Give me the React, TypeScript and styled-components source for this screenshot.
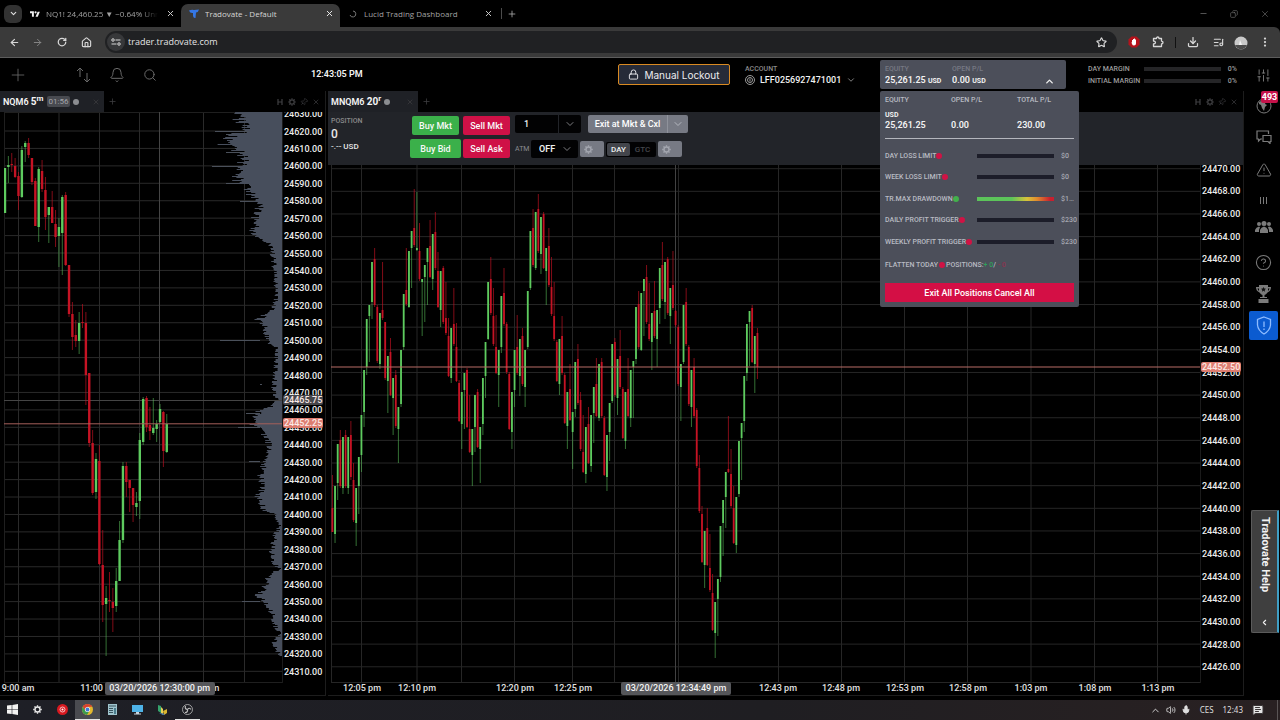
import React from 'react';
import styled, { createGlobalStyle } from 'styled-components';
import {
  ArrowLeft, ArrowRight, RotateCw, House, ChevronDown, ChevronUp, X, Plus, Star, Download,
  ListMusic, EllipsisVertical, Minus, Copy, Bell, Search, Lock, Settings, TriangleAlert,
  CircleHelp, Volume2, Mic, ChevronLeft, SlidersVertical, Pin, MessageSquareText,
} from 'lucide-react';

const Global = createGlobalStyle`
  *, *::before, *::after { box-sizing: border-box; }
  body { margin: 0; background: #000; color: #e8e8e8; font-family: Roboto, "Liberation Sans", sans-serif; font-size: 9px; }
  button, input, select { font: inherit; color: inherit; margin: 0; padding: 0; border: 0; background: none; outline: 0; }
  ul, ol, h2 { list-style: none; margin: 0; padding: 0; }
  svg { display: block; flex: none; }
`;

/* ---------- browser window ---------- */

const Page = styled.div`
  min-height: 100vh;
  display: flex;
  flex-direction: column;
`;

const TabStrip = styled.header`
  height: 27px;
  display: flex;
  align-items: center;
  font-family: "Open Sans", "Noto Sans", sans-serif;
  color: #a9a9a9;
`;

const TabSearch = styled.button`
  width: 18px;
  height: 18px;
  margin-left: 4px;
  border-radius: 6px;
  background: #323232;
  color: #e0e0e0;
  display: grid;
  place-items: center;
`;

const BrowserTab = styled.div<{ $active?: boolean; $width: number; $gap?: number }>`
  width: ${(p) => p.$width}px;
  height: 23px;
  margin-top: 4px;
  padding: 0 5px 4px 8px;
  border-radius: 7px 7px 0 0;
  background: ${(p) => (p.$active ? '#3a3a3a' : 'transparent')};
  color: ${(p) => (p.$active ? '#d6d6d6' : '#a2a2a2')};
  display: flex;
  align-items: center;
  gap: ${(p) => p.$gap ?? 5}px;
`;

const TabLabel = styled.span`
  flex: 1;
  font-size: 8px;
  line-height: 12px;
  white-space: nowrap;
  overflow: hidden;
`;

const FadedLabel = styled(TabLabel)`
  mask-image: linear-gradient(90deg, #000 85%, transparent);
`;

const IconButton = styled.button<{ $w?: number; $color?: string }>`
  width: ${(p) => p.$w ?? 12}px;
  height: 12px;
  color: ${(p) => p.$color ?? 'inherit'};
  display: grid;
  place-items: center;
`;

const Separator = styled.span<{ $color: string; $gap: number }>`
  width: 1px;
  height: 11px;
  margin: 0 ${(p) => p.$gap}px;
  background: ${(p) => p.$color};
`;

const WindowControls = styled.div`
  margin-left: auto;
  display: flex;
  color: #6e6e6e;
`;

const AddressRow = styled.div`
  height: 31px;
  padding: 0 6px 0 3px;
  background: #3a3a3a;
  border-bottom: 1px solid #5d5d5d;
  border-radius: 0 6px 0 0;
  display: flex;
  align-items: center;
  color: #d8d8d8;
`;

const Omnibox = styled.label`
  flex: 1;
  height: 22px;
  margin-left: 7px;
  padding: 0 10px 0 2px;
  border-radius: 11px;
  background: #202123;
  display: flex;
  align-items: center;
  gap: 3px;
`;

const SiteBadge = styled.span`
  width: 18px;
  height: 18px;
  border-radius: 9px;
  background: #37383a;
  display: grid;
  place-items: center;
`;

const UrlInput = styled.input`
  flex: 1;
  min-width: 0;
  font: 9px/14px "Open Sans", "Noto Sans", sans-serif;
  color: #e4e4e4;
`;

const Extensions = styled.div`
  margin-left: 10px;
  display: flex;
  align-items: center;
`;

/* ---------- trading application ---------- */

const Workspace = styled.div`
  flex: 1;
  display: grid;
  grid-template-columns: minmax(0, 1fr) 36px;
`;

const Main = styled.main`
  display: flex;
  flex-direction: column;
`;

const AppBar = styled.div`
  height: 33px;
  padding: 2px 7px 0 0;
  display: flex;
  align-items: flex-start;
  color: #6a6a6a;
`;

const ToolButtons = styled.div`
  height: 29px;
  padding-left: 8px;
  display: flex;
  align-items: center;
`;

const ToolButton = styled.button<{ $w: number }>`
  width: ${(p) => p.$w}px;
  height: 22px;
  display: flex;
  align-items: center;
`;

const Clock = styled.time`
  margin-left: 147px;
  font-size: 9px;
  font-weight: 600;
  line-height: 29px;
  color: #f4f4f4;
`;

const LockoutButton = styled.button`
  width: 112px;
  height: 21px;
  margin: 4px 15px 0 auto;
  border: 1px solid #d98a22;
  border-radius: 2px;
  background: #262b38;
  color: #ececf0;
  font-family: Inter, sans-serif;
  font-size: 10px;
  font-weight: 400;
  display: flex;
  align-items: center;
  justify-content: center;
  gap: 5px;
  white-space: nowrap;
`;

const Account = styled.div`
  width: 135px;
  padding-top: 4px;
`;

const Caption = styled.div<{ $color?: string }>`
  font-size: 7px;
  line-height: 10px;
  font-weight: 500;
  color: ${(p) => p.$color ?? '#8a8a8a'};
  white-space: nowrap;
`;

const AccountButton = styled.button`
  height: 12px;
  display: flex;
  align-items: center;
  gap: 5px;
  font-size: 9px;
  font-weight: 500;
  color: #f2f2f2;

  & > svg { color: #9a9a9a; }
`;

const EquityAnchor = styled.div`
  position: relative;
  width: 186px;
`;

const EquityBox = styled.button`
  width: 100%;
  height: 29px;
  padding: 4px 11px 0 5px;
  border-radius: 2px;
  background: #4c4f5a;
  display: grid;
  grid-template-columns: 67px 1fr auto;
  text-align: left;
`;

const Figure = styled.div`
  font-size: 9px;
  line-height: 13px;
  font-weight: 600;
  color: #f2f2f2;
  white-space: nowrap;

  & small { font-size: 7px; font-weight: 700; }
`;

const ChevronSlot = styled.span`
  padding-top: 12px;
  color: #f0f0f0;
`;

const EquityPopup = styled.section`
  position: absolute;
  z-index: 2;
  top: 31px;
  left: 0;
  width: 199px;
  height: 216px;
  padding: 3px 5px 4px;
  border-radius: 2px;
  background: #4c4f5a;
  color: #b9bbc3;
  display: flex;
  flex-direction: column;
`;

const EquityTable = styled.table`
  width: 100%;
  border-collapse: collapse;
  border-bottom: 1px solid #b4b6bd;
  table-layout: fixed;
  text-align: left;

  & th { width: 66px; padding: 0; font-size: 7px; font-weight: 500; line-height: 12px; }
  & th:last-child { width: auto; }
  & td { padding: 4px 0 7px; font-size: 9px; font-weight: 600; line-height: 11px; color: #f2f2f2; vertical-align: bottom; }
  & small { display: block; font-size: 7px; font-weight: 700; line-height: 10px; }
`;

const Limits = styled.ul`
  padding-top: 6px;
`;

const LimitRow = styled.li`
  height: 21px;
  display: grid;
  grid-template-columns: 92px 77px 1fr;
  align-items: center;
  font-size: 7px;
  font-weight: 500;
  white-space: nowrap;

  &:nth-child(even) { height: 22px; }
`;

const LimitName = styled.span`
  display: flex;
  align-items: center;
`;

const Dot = styled.i<{ $color: string; $size?: number }>`
  width: ${(p) => p.$size ?? 6}px;
  height: ${(p) => p.$size ?? 6}px;
  border-radius: 50%;
  background: ${(p) => p.$color};
`;

const LimitBar = styled.span<{ $fill?: string }>`
  height: 4px;
  background: ${(p) => p.$fill ?? '#1c1d29'};
`;

const LimitValue = styled.span`
  padding-left: 7px;
  color: #a6a8b1;
`;

const FlattenRow = styled.p`
  margin: 7px 0 12px;
  font-size: 7px;
  line-height: 12px;
  font-weight: 500;
  display: flex;
  align-items: center;
  gap: 1px;
`;

const Tint = styled.span<{ $color: string }>`
  color: ${(p) => p.$color};
`;

const ExitAll = styled.button`
  height: 19px;
  background: #d40f45;
  color: #fff;
  font-size: 9px;
  font-weight: 500;
`;

const Margins = styled.div`
  width: 149px;
  margin-left: 22px;
  padding-top: 3px;
`;

const MarginRow = styled.div`
  height: 12px;
  display: grid;
  grid-template-columns: 56px 77px 1fr;
  align-items: center;
  font-size: 7px;
  font-weight: 500;
  color: #9b9b9b;
  white-space: nowrap;
  text-align: right;

  & > :first-child { text-align: left; }
`;

const MarginBar = styled.span`
  height: 4px;
  background: #252527;
`;

const Panels = styled.div`
  flex: 1;
  margin-bottom: 4px;
  display: grid;
  grid-template-columns: 326fr 918fr;
`;

const Panel = styled.section<{ $gap?: number }>`
  min-width: 0;
  margin-left: ${(p) => p.$gap ?? 0}px;
  border: solid #1d1d1d;
  border-width: 0 1px 1px 0;
  display: flex;
  flex-direction: column;
`;

const PanelTabs = styled.div`
  height: 21px;
  padding-right: 3px;
  display: flex;
  align-items: center;
  color: #3f3f42;
`;

const PanelTab = styled.div<{ $w: number }>`
  width: ${(p) => p.$w}px;
  height: 21px;
  padding: 0 4px 0 3px;
  background: #1f2126;
  display: flex;
  align-items: center;
  gap: 3px;
`;

const Symbol = styled.h2`
  font-size: 9px;
  line-height: 14px;
  font-weight: 600;
  color: #f4f4f4;
  white-space: nowrap;

  & b { font-size: 10px; font-weight: 700; }
  & sup { font-size: 8px; line-height: 0; }
`;

const Countdown = styled.span`
  padding: 0 2px;
  border-radius: 2px;
  background: #484a50;
  color: #a5a7ac;
  font-size: 8px;
  line-height: 11px;
`;

const Push = styled.span`
  margin-left: auto;
  display: flex;
`;

const OrderBar = styled.div`
  height: 53px;
  padding: 3px 0 0 3px;
  background: #222429;
  display: flex;
`;

const Position = styled.div`
  width: 79px;
  padding-top: 1px;
  font-weight: 500;
`;

const PositionQty = styled.div`
  font-size: 12px;
  line-height: 16px;
`;

const PositionPl = styled.div`
  font-size: 8px;
  line-height: 10px;
`;

const OrderButtons = styled.div`
  padding-top: 1px;
  display: grid;
  grid-template: 19px 19px / 51px 47px;
  gap: 4px 2px;
  justify-items: center;
`;

const OrderButton = styled.button<{ $side: 'buy' | 'sell'; $w: number }>`
  width: ${(p) => p.$w}px;
  height: 19px;
  border-radius: 2px;
  background: ${(p) => (p.$side === 'buy' ? '#3bb04a' : '#cf1147')};
  color: #f8f8f8;
  font-size: 9px;
  font-weight: 500;
  white-space: nowrap;
`;

const OrderOptions = styled.div`
  margin-left: 5px;
`;

const OptionRow = styled.div<{ $top?: number }>`
  height: 18px;
  margin-top: ${(p) => p.$top ?? 0}px;
  display: flex;
  align-items: center;
`;

const Quantity = styled.div`
  width: 66px;
  height: 18px;
  margin-right: 7px;
  border-radius: 2px;
  background: #020203;
  display: flex;
  color: #7c7c80;

  & input { width: 44px; padding-left: 9px; border-right: 1px solid #222429; color: #f0f0f0; font-size: 9px; font-weight: 500; }
  & button { flex: 1; display: grid; place-items: center; }
`;

const ExitGroup = styled.div`
  width: 100px;
  height: 18px;
  border-radius: 2px;
  background: #777a84;
  display: flex;
  overflow: hidden;
  color: #fff;

  & button:first-child { width: 80px; border-right: 1px solid #8f929b; font-size: 9px; font-weight: 500; white-space: nowrap; }
  & button:last-child { flex: 1; display: grid; place-items: center; color: #b4b7bf; }
`;

const AtmLabel = styled.label`
  width: 16px;
  font-size: 7px;
  color: #8a8c91;
`;

const AtmSelect = styled.span`
  width: 47px;
  height: 18px;
  padding: 0 5px 0 8px;
  margin-right: 2px;
  border-radius: 2px;
  background: #020203;
  display: flex;
  align-items: center;
  color: #7c7c80;

  & select { flex: 1; min-width: 0; appearance: none; color: #f0f0f0; font-size: 9px; font-weight: 600; }
`;

const GearButton = styled.button`
  width: 24px;
  height: 16px;
  padding-left: 4px;
  border-radius: 2px;
  background: #777a84;
  color: #a3a6af;
`;

const Toggle = styled.div`
  width: 50px;
  height: 15px;
  margin: 0 2px;
  padding: 1px;
  border-radius: 2px;
  background: #020203;
  display: flex;
`;

const ToggleButton = styled.button<{ $on?: boolean; $w: number }>`
  width: ${(p) => p.$w}px;
  border-radius: 2px;
  background: ${(p) => (p.$on ? '#43454b' : 'transparent')};
  color: ${(p) => (p.$on ? '#f0f0f0' : '#45474c')};
  font-size: 8px;
  font-weight: 500;
`;

const ChartBody = styled.div<{ $left: number }>`
  flex: 1;
  min-height: 0;
  padding-left: ${(p) => p.$left}px;
  display: grid;
  grid-template: minmax(0, 1fr) 12px / minmax(0, 1fr) 43px;
`;

const ChartCell = styled.div`
  min-width: 0;
  min-height: 0;

  & svg { width: 100%; height: 100%; }
`;

const PriceAxis = styled.div`
  position: relative;
  min-height: 0;
  display: flex;
  flex-direction: column;
  overflow: hidden;
  border-left: 1px solid #1b1b1b;
`;

const PriceList = styled.ol<{ $top: number; $bottom: number }>`
  flex: 1;
  margin: ${(p) => p.$top}px 0 ${(p) => p.$bottom}px;
  display: flex;
  flex-direction: column;
`;

const Price = styled.li`
  flex: 1 1 0;
  min-height: 0;
  padding-left: 1px;
  display: flex;
  align-items: center;
  font-size: 9px;
  line-height: 9px;
  font-weight: 500;
  color: #ececec;
`;

const PriceTag = styled.span<{ $at: number; $bg: string }>`
  position: absolute;
  top: ${(p) => p.$at}%;
  left: 0;
  width: 40px;
  height: 10px;
  padding-left: 1px;
  transform: translateY(-50%);
  border-radius: 2px;
  background: ${(p) => p.$bg};
  color: #fbe9e6;
  font-size: 9px;
  line-height: 10px;
  font-weight: 500;
`;

const TimeAxis = styled.div`
  position: relative;
  display: flex;
`;

const Tick = styled.div<{ $span: number }>`
  flex: ${(p) => p.$span} 0 0;
  display: flex;
  justify-content: flex-end;

  & span {
    width: 0;
    display: flex;
    justify-content: center;
    white-space: nowrap;
    font-size: 9px;
    line-height: 10px;
    font-weight: 500;
    color: #e0e0e0;
  }
`;

const TimeTag = styled.span<{ $at: number }>`
  position: absolute;
  top: -1px;
  left: ${(p) => p.$at}%;
  width: 110px;
  height: 13px;
  transform: translateX(-50%);
  border-radius: 2px;
  background: #55565a;
  color: #f2f2f2;
  font-size: 9px;
  line-height: 13px;
  font-weight: 500;
  text-align: center;
`;

const Sidebar = styled.nav`
  padding: 0 2px 0 5px;
  display: flex;
  flex-direction: column;
  color: #7b7b7b;
`;

const SideButton = styled.button<{ $h: number }>`
  position: relative;
  height: ${(p) => p.$h}px;
  display: grid;
  place-items: center;
`;

const Badge = styled.span`
  position: absolute;
  top: -1px;
  right: 0;
  width: 17px;
  height: 12px;
  border-radius: 2px;
  background: #c5124a;
  color: #fff;
  font-size: 9px;
  line-height: 12px;
  font-weight: 700;
  text-align: center;
`;

const ShieldButton = styled.button`
  height: 29px;
  margin-top: 7px;
  border-radius: 2px;
  background: #0b5bd0;
  color: #8fbcff;
  display: grid;
  place-items: center;
`;

const HelpTab = styled.button`
  width: 28px;
  height: 123px;
  margin: auto 0 67px 2px;
  padding: 6px 0 5px;
  border: 1px solid #5b5b5b;
  border-right: 2px solid #3f9fc6;
  border-radius: 2px 0 0 2px;
  background: #3f3f3f;
  color: #f2f2f2;
  display: flex;
  flex-direction: column;
  align-items: center;
  justify-content: space-between;

  & span { writing-mode: vertical-rl; font-size: 11px; line-height: 14px; font-weight: 700; }
`;

/* ---------- taskbar ---------- */

const Taskbar = styled.footer`
  height: 20px;
  padding-right: 2px;
  background: linear-gradient(90deg, #1e1f26, #1f1e22 60%, #292122);
  display: flex;
`;

const TaskButton = styled.button<{ $active?: boolean; $open?: boolean }>`
  width: 25px;
  background: ${(p) => (p.$active ? '#4a4b50' : 'transparent')};
  border-bottom: 1px solid ${(p) => (p.$active || p.$open ? '#e4e4e4' : 'transparent')};
  display: grid;
  place-items: center;
`;

const Tray = styled.div`
  margin-left: auto;
  display: flex;
  align-items: center;
  gap: 5px;
  font-size: 8px;
  line-height: 12px;
  font-family: "Noto Sans", "Open Sans", sans-serif;
  color: #dedede;
`;

const TrayText = styled.span`
  margin-left: 4px;
`;

const TrayEnd = styled.span`
  width: 9px;
  height: 20px;
  border-right: 1px solid #5a5555;
`;

/* ---------- chart data ---------- */

/* One candle: direction, high, body top, body bottom, low (vertical chart units). */
type Candle = [1 | 0, number, number, number, number];

const parse = (rows: string): Candle[] =>
  rows.trim().split(/\s+/).map((row) => {
    const n = row.slice(1).split(',').map(Number);
    return [row[0] === 'g' ? 1 : 0, n[0], n[1], n[2], n[3]] as Candle;
  });

const NQ_CANDLES = parse(`
  g168,168,213,213 g156,165,167,183 r153,164,165,172 r158,166,177,178 r172,176,196,210 g146,150,197,198
  g141,143,147,162 r138,143,155,158 r158,158,182,185 r178,181,226,226 g167,169,227,242 r160,171,189,192
  r177,190,217,230 g207,207,215,243 r191,207,223,223 r210,224,237,247 g218,227,236,267 g195,197,233,275
  r192,195,265,266 r265,265,314,317 r302,314,337,350 r320,335,341,347 g312,323,341,354 r304,322,323,328
  r312,323,375,405 r373,373,443,447 r430,443,493,495 g453,459,492,499 r445,461,564,565 r530,565,605,622
  g586,598,604,656 r572,600,601,612 r588,602,608,632 g568,581,606,612 g521,540,581,581 g462,466,540,543
  r462,466,482,497 r480,480,488,512 r488,488,505,522 g492,503,507,516 g433,440,501,519 g397,399,442,445
  r396,398,427,432 r407,425,431,440 g398,428,433,435 g420,424,429,442 g404,409,422,424 r411,412,451,467
  g414,424,452,453
`);

const MNQ_CANDLES = parse(`
  r475,508,532,532 g486,486,534,543 g444,444,483,500 r430,440,486,488 g437,437,488,494 r430,435,486,488
  g437,437,488,494 r421,435,477,480 r463,480,520,522 g488,488,523,546 g457,457,486,514 g415,415,455,472
  g370,370,412,427 g319,319,367,375 g305,305,316,362 g262,262,302,319 r248,259,305,307 r305,307,361,363
  g313,313,364,369 r262,310,318,320 r322,322,378,380 g356,356,381,413 r338,352,395,396 g378,378,398,435
  r370,375,426,428 g407,407,429,463 g350,350,404,407 g294,294,347,350 r248,290,304,306 g251,251,307,308
  g231,231,248,288 r189,228,245,247 g192,248,250,251 r223,251,279,281 g279,279,282,336 g265,265,277,322
  g248,248,262,305 r220,246,277,278 g234,234,279,290 r212,232,268,270 r252,271,307,308 g271,271,310,327
  r266,268,322,324 r282,318,333,335 r318,336,376,377 g328,328,378,383 r288,324,344,346 r323,347,381,382
  r380,383,421,422 g392,392,424,449 g373,373,390,429 r368,370,427,428 r395,429,452,453 g429,429,455,486
  g395,395,427,452 r389,392,447,448 g427,427,449,483 g378,378,424,435 g342,342,376,398 g282,282,339,340
  r257,279,313,315 r288,316,344,346 r315,347,373,374 g350,350,375,407 g296,296,347,353 r268,293,324,326
  r322,324,372,374 r372,374,429,430 g392,392,432,449 g350,350,390,407 r315,347,373,375 g339,339,376,396
  r328,336,384,386 g350,350,387,407 g291,291,347,349 g231,231,288,290 r209,228,265,267 g212,212,268,270
  r194,209,251,253 g217,217,254,274 r212,214,268,269 g248,248,271,305 r228,246,285,287 r257,287,314,316
  r282,316,339,341 r340,342,381,382 g339,339,384,395 r316,336,373,375 r373,375,423,424 g392,392,426,449
  r364,389,420,421 g412,412,432,469 g362,362,409,417 r344,359,403,405 r392,400,449,451 r415,452,472,473
  g427,427,474,483 r407,424,463,464 g415,415,466,472 g387,387,413,443 r358,384,416,417 g364,364,418,421
  r358,362,416,418 r416,418,475,476 g435,435,477,491 g403,403,432,461 g344,344,401,403 r338,342,395,397
  g359,359,398,415 r330,356,387,389 r387,389,438,439 g392,392,441,449 r358,389,416,417 g370,370,418,427
  g361,361,367,418 g307,307,359,364 r291,304,347,349 g293,293,350,351 g279,279,291,336 r265,277,322,324
  r283,324,339,341 g313,313,342,370 r281,311,336,338 g310,310,339,367 g268,268,308,324 r242,265,299,301
  g262,262,302,319 r257,259,313,315 g288,288,316,344 r251,285,308,310 r310,311,325,327 r325,327,384,386
  g364,364,387,421 g305,305,362,364 r288,302,344,346 r345,347,404,406 g370,370,407,427 r358,367,416,418
  r408,410,466,468 r455,468,511,513 r506,514,562,563 g531,531,565,588 r508,528,565,566 r534,568,590,592
  r574,593,630,631 g602,602,633,658 g579,579,599,636 g526,526,577,582 g500,500,523,556 g472,472,497,528
  r416,469,472,473 r449,474,506,508 r486,508,543,544 g497,497,545,553 g441,441,494,497 g423,423,438,480
  g376,376,421,432 g324,324,373,381 g311,311,322,366 r305,308,362,363 g336,336,364,393 r328,333,367,379
`);

/* Volume-at-price outline: [y, left edge]. */
const PROFILE: [number, number][] = [
  [112, 244], [118, 242], [125, 247], [131, 247], [135, 236], [142, 226], [146, 232], [152, 244], [160, 246],
  [167, 243], [173, 237], [180, 242], [186, 248], [194, 253], [206, 261], [216, 256], [224, 257], [233, 253],
  [237, 260], [244, 269], [256, 273], [272, 274], [284, 275], [300, 275], [308, 272], [314, 266], [320, 258],
  [327, 266], [340, 266], [347, 275], [364, 275], [380, 274], [392, 273], [400, 276], [407, 269], [411, 259],
  [423, 255], [432, 262], [443, 269], [460, 267], [471, 261], [488, 262], [500, 259], [510, 266], [515, 275],
  [525, 279], [533, 275], [547, 272], [560, 271], [568, 278], [577, 268], [587, 265], [594, 259], [603, 265],
  [613, 272], [627, 275], [634, 279], [643, 272], [650, 276], [656, 280],
];

const profilePath = () => {
  let d = 'M282 112';
  for (let y = 112; y < 656; y += 1) {
    const k = PROFILE.findIndex((p) => p[0] > y);
    const [y0, x0] = PROFILE[k - 1];
    const [y1, x1] = PROFILE[k];
    const base = x0 + ((x1 - x0) * (y - y0)) / (y1 - y0);
    const noise = Math.abs(Math.sin(y * 12.9898) * 43758.5453) % 1;
    const reach = (282 - base) * 0.26 + 1;
    const x = Math.min(281, base + 1 - (noise ** 2) * reach + (noise < 0.3 ? 2 : 0));
    d += `L${x.toFixed(1)} ${y}V${y + 1}`;
  }
  return `${d}H282Z`;
};

const PROFILE_PATH = profilePath();
const PROFILE_SPIKES: [number, number][] = [[131, 215], [134, 226], [152, 226], [166, 212], [183, 226], [201, 240], [340, 220], [384, 262], [413, 246], [427, 238], [461, 249], [601, 242]];

const Candles = ({ data, x0, step, body }: { data: Candle[]; x0: number; step: number; body: number }) => (
  <g>
    {data.map(([up, high, top, bottom, low], i) => {
      const x = x0 + i * step;
      return (
        <g key={i} fill={up ? '#5ecb5f' : '#c51324'}>
          <rect x={x - 0.5} y={high} width={1} height={low - high} opacity={up ? 0.55 : 0.65} />
          <rect x={x - body / 2} y={top} width={body} height={Math.max(1, bottom - top)} />
        </g>
      );
    })}
  </g>
);

const range = (n: number) => Array.from({ length: n }, (_, i) => i);

const NqChart = () => (
  <svg viewBox="4 112 278 571" preserveAspectRatio="none" role="img" aria-label="NQM6 five minute candles">
    <g stroke="#2a2a2a">
      {range(32).map((i) => <path key={i} d={`M4 ${131 + i * 17.43}H282`} />)}
      {[18.5, 59, 99.5, 139.5, 203.5, 244.5].map((x) => <path key={x} d={`M${x} 112V683`} />)}
      <path d="M4.5 112V683M4 682.5H282M4 112.5H282" stroke="#1f1f1f" />
    </g>
    <g stroke="#4a505a">
      {PROFILE_SPIKES.map(([y, x]) => <path key={y} d={`M${x} ${y + 0.5}H260`} />)}
    </g>
    <path d={PROFILE_PATH} fill="#474e5c" />
    <path d="M159.5 112V683M4 400.5H282" stroke="#454545" />
    <Candles data={NQ_CANDLES} x0={5} step={3.37} body={2.4} />
    <path d="M4 423.8H282" stroke="#a6605b" />
  </svg>
);

const MnqChart = () => (
  <svg viewBox="331 165 869 518" preserveAspectRatio="none" role="img" aria-label="MNQM6 twenty range candles">
    <g stroke="#262626">
      {range(23).map((i) => <path key={i} d={`M331 ${168.7 + i * 22.64}H1200`} />)}
      {[361.5, 417, 461.5, 514.5, 572.5, 614.5, 678.5, 778.5, 841.5, 904.5, 967.5, 1031, 1094.5, 1157.5].map((x) => (
        <path key={x} d={`M${x} 165V683`} />
      ))}
      <path d="M331.5 165V683M331 682.5H1200" />
    </g>
    <path d="M675.5 165V683" stroke="#424242" />
    <Candles data={MNQ_CANDLES} x0={332.4} step={2.64} body={1.8} />
    <path d="M331 367H1200" stroke="#b86c66" />
  </svg>
);

const NQ_PRICES = range(33).map((i) => `${24630 - i * 10}.00`);
const MNQ_PRICES = range(23).map((i) => `${24470 - i * 2}.00`);

/* Time ticks: [label, distance from the previous tick]. */
const NQ_TICKS: [string, number][] = [['9:00 am', 14], ['11:00 am', 81], ['1:00 pm', 104], ['', 79]];
const MNQ_TICKS: [string, number][] = [
  ['12:05 pm', 31], ['12:10 pm', 55], ['12:20 pm', 98], ['12:25 pm', 58], ['12:43 pm', 205], ['12:48 pm', 63],
  ['12:53 pm', 64], ['12:58 pm', 63], ['1:03 pm', 63], ['1:08 pm', 64], ['1:13 pm', 63], ['', 42],
];

const LIMITS = [
  { name: 'DAY LOSS LIMIT', value: '$0', ok: false },
  { name: 'WEEK LOSS LIMIT', value: '$0', ok: false },
  { name: 'TR.MAX DRAWDOWN', value: '$1…', ok: true },
  { name: 'DAILY PROFIT TRIGGER', value: '$230', ok: false },
  { name: 'WEEKLY PROFIT TRIGGER', value: '$230', ok: false },
];

const DRAWDOWN_FILL = 'linear-gradient(90deg, #5cc45a 45%, #d8c23a 65%, #e08a2e 78%, #c8202f 95%)';

const Ticks = ({ items }: { items: [string, number][] }) => (
  <>
    {items.map(([label, span]) => (
      <Tick key={label} $span={span}><span>{label}</span></Tick>
    ))}
  </>
);

const PanelActions = () => (
  <Push>
    <IconButton aria-label="History"><svg width="6" height="6" viewBox="0 0 6 6" stroke="currentColor" strokeWidth="1.2"><path d="M1 0V6M5 0V6M1 3H5" /></svg></IconButton>
    <IconButton aria-label="Settings"><GearIcon size={8} /></IconButton>
    <IconButton aria-label="Pin"><Pin size={8} transform="rotate(45)" /></IconButton>
    <IconButton aria-label="Close panel"><X size={8} /></IconButton>
  </Push>
);

/* ---------- custom icons ---------- */

/* Ring with eight short teeth. */
const GearIcon = ({ size }: { size: number }) => (
  <svg width={size} height={size} viewBox="0 0 20 20" fill="none" stroke="currentColor" strokeWidth="3">
    <circle cx="10" cy="10" r="5.500" />
    {range(8).map((i) => <path key={i} d="M10 0.500V4" transform={`rotate(${i * 45} 10 10)`} />)}
  </svg>
);
const TradingViewLogo = () => (
  <svg width="10" height="8" viewBox="0 0 36 28" fill="#f0f0f0"><path d="M14 24H7V11H0V4h14v20zM28 24h-8l7.500-18h8L28 24z" /><circle cx="20" cy="8" r="4" /></svg>
);
const TradovateLogo = () => (
  <svg width="10" height="10" viewBox="0 0 20 20" fill="#3577e5"><path d="M0 3Q5 1 10 2L20 1Q19 6 14 7L13 18Q9 19 8 14V8Q2 9 0 3z" /></svg>
);
const SiteIcon = () => (
  <svg width="10" height="8" viewBox="0 0 20 16" fill="none" stroke="#d8d8d8" strokeWidth="2"><circle cx="4" cy="4" r="2.500" /><path d="M9 4H19M1 12H11" /><circle cx="16" cy="12" r="2.500" /></svg>
);
const BlockerIcon = () => (
  <svg width="12" height="12" viewBox="0 0 24 24"><path d="M7 1H17L23 7V17L17 23H7L1 17V7Z" fill="#b5121b" /><path d="M8 12V8h2V6h2V5h2v2h2v8q0 4-4 4-3 0-4-3l-1-3z" fill="#fff" /></svg>
);
const PuzzleIcon = () => (
  <svg width="12" height="12" viewBox="0 0 24 24" fill="none" stroke="currentColor" strokeWidth="2.600" strokeLinejoin="round"><path d="M3 5H9Q9 2 11.500 2T14 5H19V10Q22 10.500 22 13T19 16V21H3V16Q7 15.500 7 13T3 10Z" /></svg>
);
const AvatarIcon = () => (
  <svg width="14" height="14" viewBox="0 0 14 14"><circle cx="7" cy="7" r="6.500" fill="#c9c9c9" /><path d="M1 9H13Q11 13 7 13.500 3 13 1 9z" fill="#4b4b4b" /><path d="M6 4l2 5H5z" fill="#f4f4f4" /></svg>
);
const SwapIcon = () => (
  <svg width="15" height="18" viewBox="0 0 15 18" fill="none" stroke="currentColor"><path d="M4 11V2M1 5l3-3 3 3M11 7V16M8 13l3 3 3-3" /></svg>
);
const CoinIcon = () => (
  <svg width="10" height="10" viewBox="0 0 20 20" fill="none" stroke="currentColor" strokeWidth="2"><circle cx="10" cy="10" r="9" /><circle cx="10" cy="10" r="5" /><path d="M10 7v6" /></svg>
);
const GlobeIcon = () => (
  <svg width="16" height="16" viewBox="0 0 16 16"><circle cx="8" cy="8" r="7" fill="none" stroke="currentColor" /><path d="M3 4l4-2 3 1-1 3 2 1-2 2-1 4-2-3-1-3-2-1z" fill="currentColor" /></svg>
);
const ChatIcon = () => (
  <svg width="16" height="14" viewBox="0 0 16 14" fill="none" stroke="currentColor" strokeWidth="1.200"><path d="M6 9H4.500L2.500 11V9H1V1H12.500V4" /><path d="M7 5.500H15V11.500H14V13.500L12 11.500H7Z" /></svg>
);
const BarsIcon = () => (
  <svg width="7" height="7" viewBox="0 0 7 7" stroke="currentColor"><path d="M.5 0V7M3.500 0V7M6.500 0V7" /></svg>
);
const PeopleIcon = () => (
  <svg width="18" height="12" viewBox="0 0 18 12" fill="currentColor"><circle cx="9" cy="2.500" r="2.500" /><circle cx="4" cy="3" r="2" /><circle cx="14" cy="3" r="2" /><path d="M5 12V9q1-3 4-3.500Q12 6 13 9v3zM0 11V9q1-3 4-3.500l1 .8L4 9v2zM18 11V9q-1-3-4-3.500l-1 .8L14 9v2z" /></svg>
);
const TrophyIcon = () => (
  <svg width="15" height="18" viewBox="0 0 15 18"><path d="M3 0H12V2H15Q15 6 11.500 7.500 10 9.500 8.500 10V12H11V13H4V12H6.500V10Q5 9.500 3.500 7.500 0 6 0 2H3zM1.500 3.500Q2 5 3 6V3.500zM13.500 3.500H12V6Q13 5 13.500 3.500z" fill="currentColor" fillRule="evenodd" /><path d="M7.500 2l.8 1.600 1.700.2-1.300 1.200.4 1.700-1.600-.9-1.600.9.4-1.700L5 3.800l1.700-.2z" fill="#111" /><path d="M2.500 14H12.500V18H2.500z" fill="currentColor" /></svg>
);
const ShieldIcon = () => (
  <svg width="16" height="19" viewBox="0 0 16 19" fill="none" stroke="currentColor" strokeWidth="1.300"><path d="M8 1l6.500 2.500V9Q14 14.500 8 18 2 14.500 1.500 9V3.500z" /><path d="M8 5.500V11M8 12.500V14" /></svg>
);
const WindowsIcon = () => (
  <svg width="11" height="11" viewBox="0 0 11 11" fill="#f4f4f4"><path d="M0 1.600L4.700 1V5.200H0zM5.300.9L11 0V5.200H5.300zM0 5.800H4.700V10L0 9.400zM5.300 5.800H11V11L5.300 10.100z" /></svg>
);
const RecordIcon = () => (
  <svg width="11" height="11" viewBox="0 0 11 11"><circle cx="5.500" cy="5.500" r="5.500" fill="#d81920" /><circle cx="5.500" cy="5.500" r="2.500" fill="none" stroke="#fff" strokeWidth=".7" /><circle cx="5.500" cy="5.500" r="1" fill="#fff" /></svg>
);
const ChromeIcon = () => (
  <svg width="11" height="11" viewBox="0 0 22 22"><circle cx="11" cy="11" r="11" fill="#e3b92f" /><path d="M1.500 5.500A11 11 0 0 1 20.500 5.500H11L7 13.500z" fill="#d8402f" /><path d="M1.500 5.500A11 11 0 0 0 10 22L15 13.500 7 14z" fill="#3b9b4e" /><circle cx="11" cy="11" r="5" fill="#fff" /><circle cx="11" cy="11" r="3.800" fill="#4079d8" /></svg>
);
const NotesIcon = () => (
  <svg width="9" height="11" viewBox="0 0 9 11"><path d="M0 0H9V11H0z" fill="#9fc3cd" /><path d="M1 2H8M1 4.500H5M1 6.500H5M1 8.500H5" stroke="#38545e" /><path d="M6 4H8V10H6z" fill="#4a7c8c" /></svg>
);
const MonitorIcon = () => (
  <svg width="11" height="11" viewBox="0 0 11 11"><path d="M0 1H11V8H0z" fill="#4eb3e8" /><path d="M4 8H7V9.500H9V10.500H2V9.500H4z" fill="#c8d4dc" /></svg>
);
const ChartAppIcon = () => (
  <svg width="9" height="10" viewBox="0 0 9 10"><path d="M0 0L3 1V8L0 6z" fill="#35a36c" /><path d="M3 2L5 4V9L3 8z" fill="#e8d15a" /><path d="M5 6L9 4V8L6 10z" fill="#d9b52e" /><path d="M1 8L7 9 5 10z" fill="#4b87c9" /></svg>
);
const ObsIcon = () => (
  <svg width="11" height="11" viewBox="0 0 22 22" fill="none" stroke="#bcbcbc" strokeWidth="1.600"><circle cx="11" cy="11" r="10" /><path d="M11 11Q5 10 7 4M11 11Q15 6 18 11M11 11Q12 17 6 17" strokeWidth="2.400" /></svg>
);

/* ---------- sections ---------- */

const BrowserChrome = () => (
  <>
    <TabStrip>
      <TabSearch aria-label="Search tabs"><ChevronDown size={9} strokeWidth={3} /></TabSearch>
      <BrowserTab $width={159} $gap={6}>
        <TradingViewLogo />
        <FadedLabel>NQ1! 24,460.25 ▼ −0.64% Unn</FadedLabel>
        <IconButton aria-label="Close tab" $color="#d0d0d0"><X size={9} strokeWidth={2.500} /></IconButton>
      </BrowserTab>
      <BrowserTab $active $width={159} $gap={6}>
        <TradovateLogo />
        <TabLabel>Tradovate - Default</TabLabel>
        <IconButton aria-label="Close tab" $color="#f0f0f0"><X size={9} strokeWidth={2.500} /></IconButton>
      </BrowserTab>
      <BrowserTab $width={159} $gap={6}>
        <svg width="10" height="10" viewBox="0 0 10 10" fill="none" stroke="#777"><path d="M5 2A3 3 0 1 1 2 6" /></svg>
        <TabLabel>Lucid Trading Dashboard</TabLabel>
        <IconButton aria-label="Close tab" $color="#d0d0d0"><X size={9} strokeWidth={2.500} /></IconButton>
      </BrowserTab>
      <Separator $color="#4b4b4b" $gap={2} />
      <IconButton aria-label="New tab" $w={16}><Plus size={10} /></IconButton>
      <WindowControls>
        <IconButton aria-label="Minimize" $w={31}><Minus size={9} /></IconButton>
        <IconButton aria-label="Restore" $w={30}><Copy size={8} transform="scale(-1 1)" /></IconButton>
        <IconButton aria-label="Close window" $w={31}><X size={10} strokeWidth={1.500} /></IconButton>
      </WindowControls>
    </TabStrip>
    <AddressRow>
      <IconButton aria-label="Back" $w={22}><ArrowLeft size={11} strokeWidth={2.500} /></IconButton>
      <IconButton aria-label="Forward" $w={25} $color="#8a8a8a"><ArrowRight size={11} /></IconButton>
      <IconButton aria-label="Reload" $w={24}><RotateCw size={10} strokeWidth={3} /></IconButton>
      <IconButton aria-label="Home" $w={24}><House size={11} strokeWidth={2.500} /></IconButton>
      <Omnibox>
        <SiteBadge><SiteIcon /></SiteBadge>
        <UrlInput aria-label="Address" defaultValue="trader.tradovate.com" />
        <Star size={11} strokeWidth={2.500} />
      </Omnibox>
      <Extensions>
        <IconButton aria-label="Blocker" $w={14}><BlockerIcon /></IconButton>
        <IconButton aria-label="Extensions" $w={34}><PuzzleIcon /></IconButton>
        <Separator $color="#111" $gap={0} />
        <IconButton aria-label="Downloads" $w={34}><Download size={12} strokeWidth={2.500} /></IconButton>
        <IconButton aria-label="Media" $w={16}><ListMusic size={11} strokeWidth={2.500} /></IconButton>
        <IconButton aria-label="Profile" $w={30}><AvatarIcon /></IconButton>
        <IconButton aria-label="Menu" $w={18}><EllipsisVertical size={12} strokeWidth={2.500} /></IconButton>
      </Extensions>
    </AddressRow>
  </>
);

const EquityMenu = () => (
  <EquityPopup>
    <EquityTable>
      <thead><tr><th>EQUITY</th><th>OPEN P/L</th><th>TOTAL P/L</th></tr></thead>
      <tbody><tr><td><small>USD</small>25,261.25</td><td>0.00</td><td>230.00</td></tr></tbody>
    </EquityTable>
    <Limits>
      {LIMITS.map((l) => (
        <LimitRow key={l.name}>
          <LimitName>{l.name}<Dot $color={l.ok ? '#43b04c' : '#d01345'} /></LimitName>
          <LimitBar $fill={l.ok ? DRAWDOWN_FILL : undefined} />
          <LimitValue>{l.value}</LimitValue>
        </LimitRow>
      ))}
    </Limits>
    <FlattenRow>
      FLATTEN TODAY <Dot $color="#d01345" /> <span>POSITIONS:<Tint $color="#2fa05a">+ 0</Tint>/ <Tint $color="#8c3450">- 0</Tint></span>
    </FlattenRow>
    <ExitAll>Exit All Positions Cancel All</ExitAll>
  </EquityPopup>
);

const TopBar = () => (
  <AppBar>
    <ToolButtons>
      <ToolButton $w={68} aria-label="Add"><Plus size={20} strokeWidth={1} /></ToolButton>
      <ToolButton $w={33} aria-label="Transfer"><SwapIcon /></ToolButton>
      <ToolButton $w={34} aria-label="Alerts"><Bell size={16} strokeWidth={1.500} /></ToolButton>
      <ToolButton $w={21} aria-label="Search"><Search size={14} strokeWidth={1.700} /></ToolButton>
    </ToolButtons>
    <Clock>12:43:05 PM</Clock>
    <LockoutButton><Lock size={11} />Manual Lockout</LockoutButton>
    <Account>
      <Caption>ACCOUNT</Caption>
      <AccountButton><CoinIcon />LFF0256927471001<ChevronDown size={10} /></AccountButton>
    </Account>
    <EquityAnchor>
      <EquityBox aria-expanded="true">
        <div><Caption $color="#777984">EQUITY</Caption><Figure>25,261.25 <small>USD</small></Figure></div>
        <div><Caption $color="#777984">OPEN P/L</Caption><Figure>0.00 <small>USD</small></Figure></div>
        <ChevronSlot><ChevronUp size={11} strokeWidth={3} /></ChevronSlot>
      </EquityBox>
      <EquityMenu />
    </EquityAnchor>
    <Margins>
      <MarginRow><span>DAY MARGIN</span><MarginBar /><span>0%</span></MarginRow>
      <MarginRow><span>INITIAL MARGIN</span><MarginBar /><span>0%</span></MarginRow>
    </Margins>
  </AppBar>
);

const OrderEntry = () => (
  <OrderBar>
    <Position>
      <Caption>POSITION</Caption>
      <PositionQty>0</PositionQty>
      <PositionPl>-.-- USD</PositionPl>
    </Position>
    <OrderButtons>
      <OrderButton $side="buy" $w={47}>Buy Mkt</OrderButton>
      <OrderButton $side="sell" $w={47}>Sell Mkt</OrderButton>
      <OrderButton $side="buy" $w={51}>Buy Bid</OrderButton>
      <OrderButton $side="sell" $w={47}>Sell Ask</OrderButton>
    </OrderButtons>
    <OrderOptions>
      <OptionRow>
        <Quantity>
          <input aria-label="Quantity" defaultValue="1" />
          <button aria-label="Quantity presets"><ChevronDown size={12} /></button>
        </Quantity>
        <ExitGroup>
          <button>Exit at Mkt &amp; Cxl</button>
          <button aria-label="Exit options"><ChevronDown size={12} /></button>
        </ExitGroup>
      </OptionRow>
      <OptionRow $top={7}>
        <AtmLabel htmlFor="atm">ATM</AtmLabel>
        <AtmSelect>
          <select id="atm" defaultValue="OFF"><option>OFF</option></select>
          <ChevronDown size={12} />
        </AtmSelect>
        <GearButton aria-label="ATM settings"><GearIcon size={9} /></GearButton>
        <Toggle><ToggleButton $on $w={23}>DAY</ToggleButton><ToggleButton $w={25}>GTC</ToggleButton></Toggle>
        <GearButton aria-label="Order settings"><GearIcon size={9} /></GearButton>
      </OptionRow>
    </OrderOptions>
  </OrderBar>
);

const App = () => (
  <>
    <Global />
    <Page>
      <BrowserChrome />
      <Workspace>
        <Main>
          <TopBar />
          <Panels>
            <Panel>
              <PanelTabs>
                <PanelTab $w={104}>
                  <Symbol>NQM6 <b>5<sup>m</sup></b></Symbol>
                  <Countdown>01:56</Countdown>
                  <Dot $color="#8b8d91" />
                  <Push><X size={8} /></Push>
                </PanelTab>
                <IconButton aria-label="Add tab" $w={17}><Plus size={9} /></IconButton>
                <PanelActions />
              </PanelTabs>
              <ChartBody $left={4}>
                <ChartCell><NqChart /></ChartCell>
                <PriceAxis>
                  <PriceList $top={-6} $bottom={2}>{NQ_PRICES.map((p) => <Price key={p}>{p}</Price>)}</PriceList>
                  <PriceTag $at={50.500} $bg="#46464a">24465.75</PriceTag>
                  <PriceTag $at={54.500} $bg="#dd7d70">24452.25</PriceTag>
                </PriceAxis>
                <TimeAxis>
                  <Ticks items={NQ_TICKS} />
                  <TimeTag $at={56}>03/20/2026 12:30:00 pm</TimeTag>
                </TimeAxis>
              </ChartBody>
            </Panel>
            <Panel $gap={2}>
              <PanelTabs>
                <PanelTab $w={90}>
                  <Symbol>MNQM6 <b>20<sup>r</sup></b></Symbol>
                  <Dot $color="#8b8d91" />
                  <Push><X size={8} /></Push>
                </PanelTab>
                <IconButton aria-label="Add tab" $w={17}><Plus size={9} /></IconButton>
                <PanelActions />
              </PanelTabs>
              <OrderEntry />
              <ChartBody $left={3}>
                <ChartCell><MnqChart /></ChartCell>
                <PriceAxis>
                  <PriceList $top={-7} $bottom={4}>{MNQ_PRICES.map((p) => <Price key={p}>{p}</Price>)}</PriceList>
                  <PriceTag $at={39} $bg="#dd7d70">24452.50</PriceTag>
                </PriceAxis>
                <TimeAxis>
                  <Ticks items={MNQ_TICKS} />
                  <TimeTag $at={39.700}>03/20/2026 12:34:49 pm</TimeTag>
                </TimeAxis>
              </ChartBody>
            </Panel>
          </Panels>
        </Main>
        <Sidebar>
          <SideButton $h={34} aria-label="Layout controls"><SlidersVertical size={15} strokeWidth={1.500} /></SideButton>
          <SideButton $h={28} aria-label="News"><GlobeIcon /><Badge>493</Badge></SideButton>
          <SideButton $h={34} aria-label="Chat"><ChatIcon /></SideButton>
          <SideButton $h={32} aria-label="Warnings"><TriangleAlert size={16} strokeWidth={1.500} /></SideButton>
          <SideButton $h={28} aria-label="Modules"><BarsIcon /></SideButton>
          <SideButton $h={26} aria-label="Community"><PeopleIcon /></SideButton>
          <SideButton $h={44} aria-label="Help"><CircleHelp size={17} strokeWidth={1.500} /></SideButton>
          <SideButton $h={20} aria-label="Leaderboard"><TrophyIcon /></SideButton>
          <ShieldButton aria-label="Risk"><ShieldIcon /></ShieldButton>
          <HelpTab><span>Tradovate Help</span><ChevronLeft size={9} strokeWidth={3} /></HelpTab>
        </Sidebar>
      </Workspace>
      <Taskbar>
        <TaskButton aria-label="Start"><WindowsIcon /></TaskButton>
        <TaskButton aria-label="Settings"><GearIcon size={9} /></TaskButton>
        <TaskButton aria-label="Recorder"><RecordIcon /></TaskButton>
        <TaskButton $active aria-label="Chrome"><ChromeIcon /></TaskButton>
        <TaskButton aria-label="Notes"><NotesIcon /></TaskButton>
        <TaskButton aria-label="Desktop"><MonitorIcon /></TaskButton>
        <TaskButton aria-label="Charts"><ChartAppIcon /></TaskButton>
        <TaskButton $open aria-label="OBS"><ObsIcon /></TaskButton>
        <Tray>
          <ChevronUp size={11} />
          <Volume2 size={10} />
          <Mic size={10} fill="currentColor" />
          <TrayText>CES</TrayText>
          <TrayText>12:43</TrayText>
          <TrayText><MessageSquareText size={12} fill="#e4e4e4" color="#3a3536" /></TrayText>
          <TrayEnd />
        </Tray>
      </Taskbar>
    </Page>
  </>
);

export default App;
